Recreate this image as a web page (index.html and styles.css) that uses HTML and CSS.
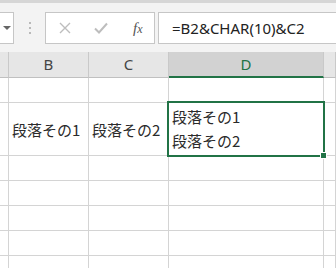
FILE: index.html
```html
<!DOCTYPE html>
<html lang="ja">

<head>
    <meta charset="UTF-8" />
    <meta name="viewport" content="width=device-width, initial-scale=1.0" />
    <title>Excel</title>
    <link rel="stylesheet" href="styles.css">
</head>

<body>
    <div class="toolbar">
        <div class="name-box">
            <span class="arrow"></span>
        </div>
        <div class="grip">
            <span></span><span></span><span></span>
        </div>
        <div class="fx-buttons">
            <svg class="btn-icon" width="12" height="12" viewBox="0 0 12 12">
                <path d="M1 1 L11 11 M11 1 L1 11" stroke="#bdbdbd" stroke-width="1.4" fill="none" />
            </svg>
            <svg class="btn-icon" width="14" height="12" viewBox="0 0 14 12">
                <path d="M1 6.5 L5 10.5 L13 1.5" stroke="#bdbdbd" stroke-width="2" fill="none" />
            </svg>
            <span class="fx">f<i>x</i></span>
        </div>
        <div class="formula">=B2&amp;CHAR(10)&amp;C2</div>
    </div>

    <div class="sheet">
        <div class="cell head"></div>
        <div class="cell head">B</div>
        <div class="cell head">C</div>
        <div class="cell head active">D</div>
        <div class="cell head"></div>

        <div class="cell row-1"></div>
        <div class="cell row-1"></div>
        <div class="cell row-1"></div>
        <div class="cell row-1"></div>
        <div class="cell row-1"></div>

        <div class="cell row-2"></div>
        <div class="cell row-2 text">段落その1</div>
        <div class="cell row-2 text">段落その2</div>
        <div class="cell row-2 text multi">
            <span>段落その1</span>
            <span>段落その2</span>
            <div class="selection"><div class="handle"></div></div>
        </div>
        <div class="cell row-2"></div>

        <div class="cell"></div><div class="cell"></div><div class="cell"></div><div class="cell"></div><div class="cell"></div>
        <div class="cell"></div><div class="cell"></div><div class="cell"></div><div class="cell"></div><div class="cell"></div>
        <div class="cell"></div><div class="cell"></div><div class="cell"></div><div class="cell"></div><div class="cell"></div>
        <div class="cell"></div><div class="cell"></div><div class="cell"></div><div class="cell"></div><div class="cell"></div>
        <div class="cell"></div><div class="cell"></div><div class="cell"></div><div class="cell"></div><div class="cell"></div>
    </div>
</body>

</html>
```

FILE: styles.css
```css
body {
    margin: 0;
    padding: 0;
    width: 336px;
    height: 268px;
    overflow: hidden;
    background: #fff;
    font-family: "Noto Sans", "Noto Sans CJK JP", sans-serif;
    color: #222;
}

.toolbar {
    height: 52px;
    box-sizing: border-box;
    border-top: 3px solid #d6d6d6;
    background-color: #f3f3f3;
    display: flex;
    align-items: flex-start;
    padding-top: 9px;
}

.name-box {
    width: 14px;
    height: 32px;
    box-sizing: border-box;
    background: #fff;
    border: 1px solid #c6c6c6;
    border-left: none;
    display: flex;
    align-items: center;
    justify-content: center;
}

.arrow {
    width: 0;
    height: 0;
    border-left: 4px solid transparent;
    border-right: 4px solid transparent;
    border-top: 4px solid #666;
}

.grip {
    width: 31px;
    height: 32px;
    display: flex;
    flex-direction: column;
    align-items: center;
    justify-content: center;
    gap: 3px;
}

.grip span {
    width: 2px;
    height: 2px;
    background: #b9b9b9;
}

.fx-buttons {
    width: 110px;
    height: 32px;
    box-sizing: border-box;
    background: #fff;
    border: 1px solid #c6c6c6;
    display: flex;
    align-items: center;
    padding-left: 13px;
    gap: 23px;
}

.fx {
    font-family: "Liberation Serif", serif;
    font-style: italic;
    font-size: 15px;
    color: #555;
    margin-left: 2px;
}

.fx i {
    font-size: 12px;
}

.formula {
    margin-left: 3px;
    flex: 1;
    height: 32px;
    box-sizing: border-box;
    background: #fff;
    border: 1px solid #c6c6c6;
    border-right: none;
    padding-left: 13px;
    font-size: 15px;
    line-height: 30px;
    color: #222;
    white-space: nowrap;
}

.sheet {
    display: grid;
    grid-template-columns: 9px 80px 80px 155px 1fr;
    grid-template-rows: 26px 25px 53px 25px 25px 25px 25px 25px;
    background: #fff;
}

.cell {
    box-sizing: border-box;
    border-right: 1px solid #d4d4d4;
    border-bottom: 1px solid #d4d4d4;
}

.head {
    background: #e6e6e6;
    border-right-color: #c9c9c9;
    border-bottom-color: #c0c0c0;
    font-size: 15px;
    color: #444;
    text-align: center;
    line-height: 25px;
}

.head.active {
    background: #d2d2d2;
    color: #217346;
    border-bottom: 2px solid #217346;
    line-height: 24px;
}

.text {
    font-family: "Noto Sans CJK JP", sans-serif;
    font-size: 15px;
    padding-left: 3px;
    display: flex;
    align-items: center;
    white-space: nowrap;
    color: #2a2a2a;
}

.multi {
    position: relative;
    flex-direction: column;
    align-items: flex-start;
    justify-content: center;
    line-height: 24px;
}

.selection {
    position: absolute;
    left: -2px;
    top: -2px;
    width: 158px;
    height: 56px;
    box-sizing: border-box;
    border: 2px solid #217346;
}

.handle {
    position: absolute;
    right: -4px;
    bottom: -4px;
    width: 5px;
    height: 5px;
    background: #217346;
    border: 1px solid #fff;
}
```
